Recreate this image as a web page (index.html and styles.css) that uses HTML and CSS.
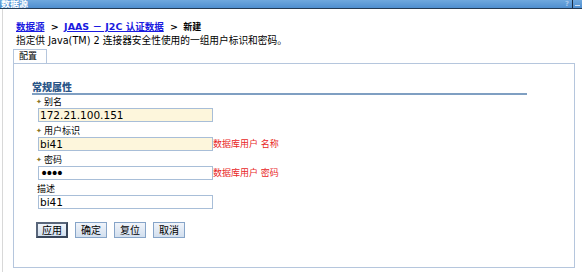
FILE: index.html
```html
<!DOCTYPE html>
<html lang="zh">
<head>
    <meta charset="UTF-8">
    <title>数据源</title>
    <link rel="stylesheet" href="styles.css">
</head>
<body>
    <div class="titlebar">
        <span class="title">数据源</span>
        <span class="tools">
            <span class="help">?</span>
            <span class="sep"></span>
            <span class="min"></span>
        </span>
    </div>

    <div class="page">
        <div class="crumbs">
            <a href="#">数据源</a>
            <span class="arrow">&gt;</span>
            <a href="#">JAAS － J2C 认证数据</a>
            <span class="arrow">&gt;</span>
            <span class="here">新建</span>
        </div>
        <p class="desc">指定供 Java(TM) 2 连接器安全性使用的一组用户标识和密码。</p>

        <div class="tabs">
            <span class="tab">配置</span>
        </div>
        <div class="panel">
            <h3 class="section">常规属性</h3>

            <div class="field">
                <label><span class="req">✦</span>别名</label>
                <div class="row">
                    <input class="txt required" type="text" value="172.21.100.151">
                </div>
            </div>

            <div class="field">
                <label><span class="req">✦</span>用户标识</label>
                <div class="row">
                    <input class="txt required" type="text" value="bi41">
                    <span class="note">数据库用户 名称</span>
                </div>
            </div>

            <div class="field">
                <label><span class="req">✦</span>密码</label>
                <div class="row">
                    <input class="txt pw" type="password" value="bi41">
                    <span class="note">数据库用户 密码</span>
                </div>
            </div>

            <div class="field">
                <label class="plain">描述</label>
                <div class="row">
                    <input class="txt" type="text" value="bi41">
                </div>
            </div>

            <div class="buttons">
                <button class="btn focus">应用</button>
                <button class="btn">确定</button>
                <button class="btn">复位</button>
                <button class="btn">取消</button>
            </div>
        </div>
    </div>
</body>
</html>
```

FILE: styles.css
```css
body {
    margin: 0;
    font-family: "DejaVu Sans", "Noto Sans CJK SC", sans-serif;
    font-size: 10px;
    color: #000;
    background: #fff;
    width: 582px;
    height: 272px;
    overflow: hidden;
}

/* 上のタイトルバー */
.titlebar {
    height: 8px;
    background: linear-gradient(#6fa8de, #4f8fd0);
    border-bottom: 1px solid #243b55;
    display: flex;
    justify-content: space-between;
    align-items: center;
    overflow: hidden;
}
.title {
    color: #fff;
    font-weight: bold;
    font-size: 9px;
    line-height: 8px;
    padding-left: 1px;
}
.tools {
    display: flex;
    align-items: center;
    height: 8px;
    padding-right: 2px;
}
.help {
    color: #a9c8ea;
    font-size: 7px;
    font-weight: bold;
    line-height: 8px;
    margin-right: 3px;
}
.sep {
    width: 1px;
    height: 8px;
    background: #1d2c40;
    margin-right: 2px;
}
.min {
    width: 5px;
    height: 1px;
    background: #cfe0f2;
    margin-top: 2px;
}

.page {
    border-left: 1px solid #d8d8d8;
    margin-left: 2px;
    padding: 11px 7px 0 10px;
    height: 263px;
    box-sizing: border-box;
}

.crumbs {
    font-weight: bold;
    font-size: 9.5px;
    line-height: 13px;
    height: 13px;
    padding-left: 3px;
}
.crumbs a {
    color: #1a1ae0;
    text-decoration: underline;
}
.arrow {
    margin: 0 2px 0 3px;
}
.here {
    font-size: 9px;
}
.desc {
    margin: 1px 0 0 3px;
    line-height: 13px;
    height: 13px;
    font-size: 9.7px;
}

.tabs {
    margin-top: 2px;
    display: flex;
}
.tab {
    border: 1px solid #b5c6dd;
    border-bottom: none;
    padding: 0 9px 0 5px;
    height: 13px;
    line-height: 13px;
    font-size: 9px;
    background: #fff;
}
.panel {
    border: 1px solid #b5c6dd;
    height: 205px;
    box-sizing: border-box;
    padding: 18px 0 0 18px;
}

.section {
    margin: 0 47px 0 0;
    font-size: 10px;
    color: #2a5587;
    font-weight: 900;
    line-height: 11px;
    height: 11px;
    border-bottom: 2px solid #7f9fc2;
}

.field {
    margin-top: 5px;
    padding-left: 4px;
}
.section + .field {
    margin-top: 2px;
}
.field label {
    display: block;
    font-size: 9px;
    line-height: 11px;
    height: 11px;
}
.req {
    color: #8a7424;
    font-size: 7px;
    vertical-align: 1px;
    margin-right: 2px;
}
.plain {
    padding-left: 1px;
}
.row {
    display: flex;
    align-items: center;
    padding-left: 2px;
    height: 13px;
}
.txt {
    width: 175px;
    height: 14px;
    box-sizing: border-box;
    border: 1px solid #a8bed8;
    background: #fff;
    font-family: "DejaVu Sans", sans-serif;
    font-size: 10.5px;
    padding: 0 1px;
    margin: 0;
    outline: none;
}
.txt.required {
    background: #fdf6dc;
}
.pw {
    font-size: 14px;
    letter-spacing: -3px;
}
.note {
    color: #e81e1e;
    font-size: 9px;
}

.buttons {
    display: flex;
    gap: 7px;
    margin-top: 14px;
    padding-left: 4px;
}
.btn {
    height: 16px;
    width: 32px;
    padding: 0;
    font-family: "Noto Sans CJK SC", sans-serif;
    font-size: 10px;
    line-height: 12px;
    background: linear-gradient(#f0f4fa, #d2dfee);
    border: 1px solid #86a4c8;
    border-radius: 0;
    color: #000;
}
.btn.focus {
    border: 2px solid #39465a;
    border-top-color: #59667a;
    border-left-color: #59667a;
}
```
